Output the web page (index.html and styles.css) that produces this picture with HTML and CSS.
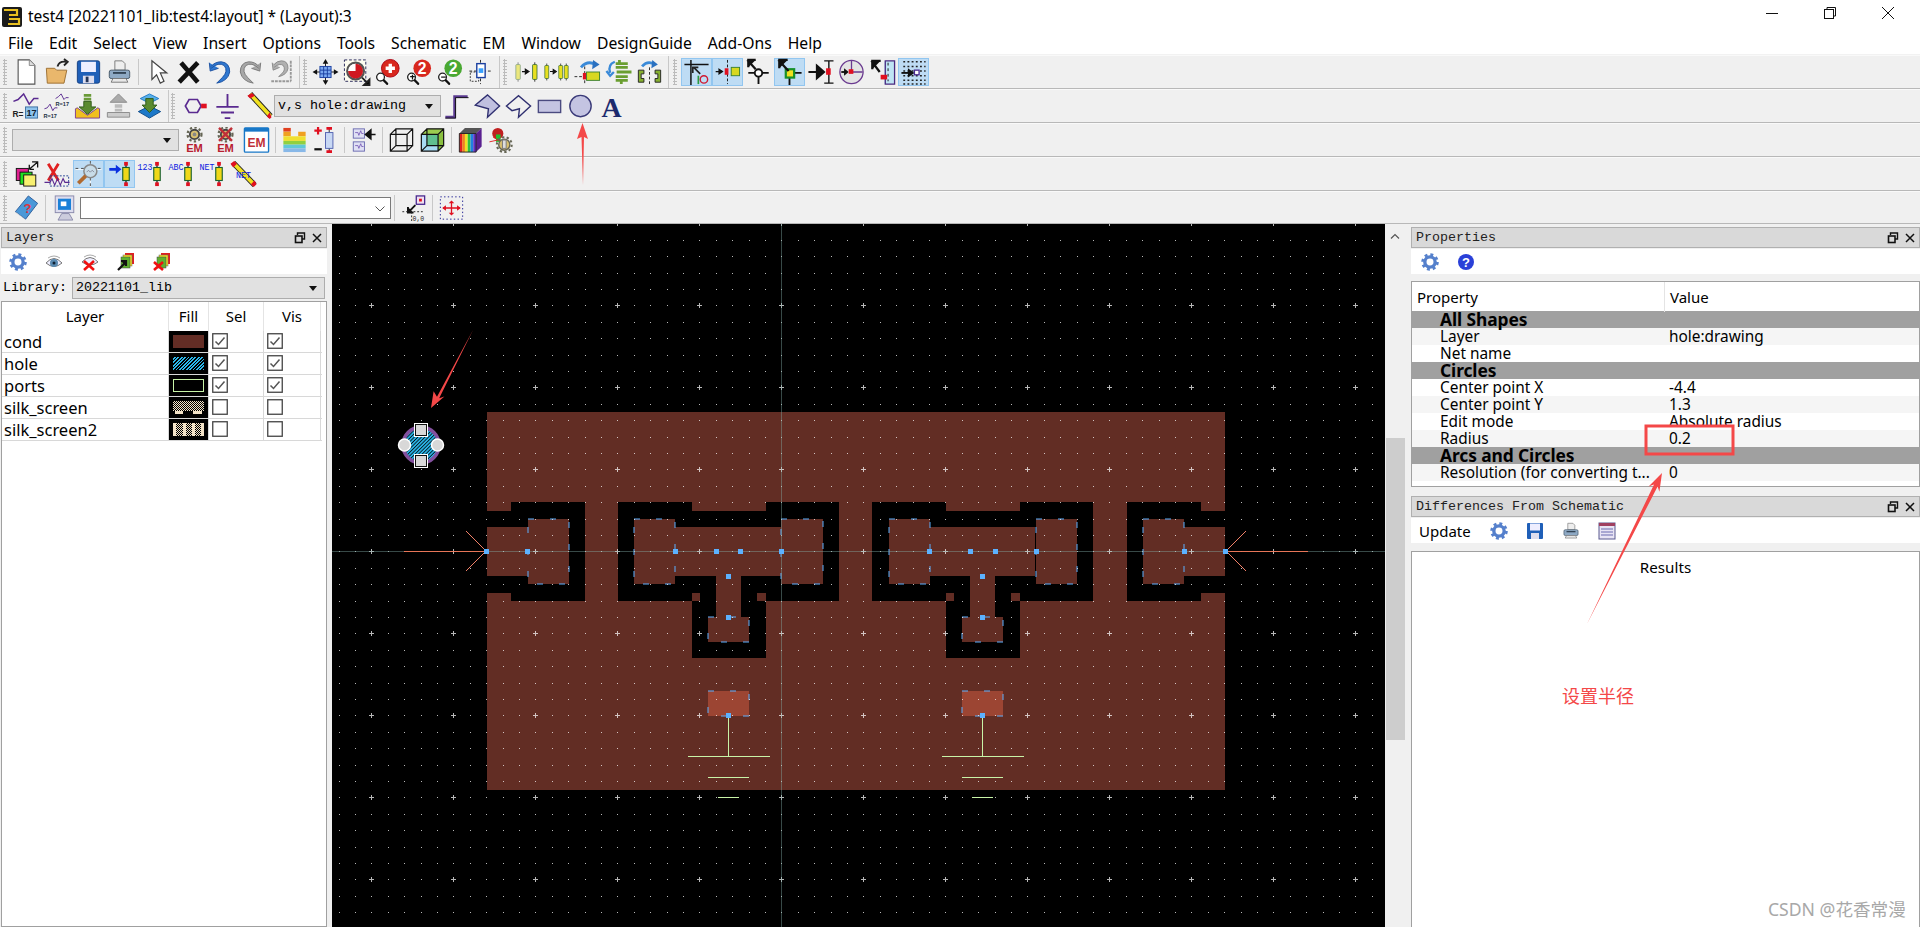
FILE: index.html
```html
<!DOCTYPE html>
<html lang="en">
<head>
<meta charset="utf-8">
<title>test4 layout</title>
<link rel="stylesheet" href="styles.css">
</head>
<body>
<svg class="defs" width="0" height="0">
  <defs>
    <symbol id="gear" viewBox="0 0 16 16"><circle cx="8" cy="8" r="4.6" fill="none" stroke="currentColor" stroke-width="3"/><circle cx="8" cy="8" r="6.6" fill="none" stroke="currentColor" stroke-width="2.4" stroke-dasharray="2.6 2.6"/></symbol>
    <symbol id="gearem" viewBox="0 0 28 28"><circle cx="14" cy="8" r="5" fill="#d8c070" stroke="#444" stroke-width="2"/><circle cx="14" cy="8" r="7.5" fill="none" stroke="#665" stroke-width="2.4" stroke-dasharray="2.5 2.5"/><circle cx="14" cy="8" r="2" fill="#888"/><text x="14" y="27" class="em">EM</text></symbol>
    <symbol id="comp" viewBox="0 0 14 28"><path d="M7 1v26" stroke="#222" stroke-width="1.4"/><rect x="5" y="1" width="4" height="4" fill="#e01020"/><rect x="5" y="23" width="4" height="4" fill="#e01020"/><rect x="3.5" y="7" width="7" height="14" fill="#f0d818" stroke="#186030" stroke-width="1.2"/></symbol>
    <symbol id="comp2" viewBox="0 0 10 28"><path d="M5 1v26" stroke="#222" stroke-width="1.2"/><rect x="2" y="4" width="6" height="20" rx="1" fill="#e8e020" stroke="#266030"/></symbol>
    <symbol id="blk" viewBox="0 0 14 12"><path d="M0 6h7M6 2l6 4-6 4z" stroke="#111" stroke-width="2" fill="#111"/></symbol>
    <symbol id="mag" viewBox="0 0 14 14"><circle cx="5.5" cy="5.5" r="4.2" fill="#fff" stroke="#222" stroke-width="1.4"/><path d="M8.5 8.5l5 5" stroke="#111" stroke-width="2.4"/></symbol>
    <symbol id="chk" viewBox="0 0 16 16"><rect x=".75" y=".75" width="14.5" height="14.5" fill="#fff" stroke="#444" stroke-width="1.3"/></symbol>
    <symbol id="tick" viewBox="0 0 16 16"><rect x=".75" y=".75" width="14.5" height="14.5" fill="#fff" stroke="#444" stroke-width="1.3"/><path d="M3.5 8.5l3 3 6-7" fill="none" stroke="#555" stroke-width="1.5"/></symbol>
    <symbol id="dock" viewBox="0 0 12 12"><path d="M3.5 3V1h7v6H8" fill="none" stroke="#111" stroke-width="1.4"/><rect x="1.5" y="4" width="6.5" height="6.5" fill="none" stroke="#111" stroke-width="1.6"/></symbol>
    <symbol id="close" viewBox="0 0 12 12"><path d="M2 2l8 8M10 2l-8 8" stroke="#111" stroke-width="1.5"/></symbol>
    <symbol id="printer" viewBox="0 0 28 28"><path d="M9 12V2h8l3 3v7z" fill="#eee" stroke="#777"/><rect x="3" y="12" width="22" height="9" rx="2" fill="#8ea9c4" stroke="#456"/><path d="M7 21h14l2 4H5z" fill="#e8e8e8" stroke="#777"/><rect x="7" y="14" width="14" height="2" fill="#345"/></symbol>
    <pattern id="grid" patternUnits="userSpaceOnUse" x="740" y="510" width="82" height="82">
      <path d="M39 41h5v1h-5zM41 39h1v5h-1z" fill="#fff"/>
      <path d="M58 41h1v1h-1zM74 41h1v1h-1zM9 41h1v1H9zM25 41h1v1h-1zM41 58h1v1h-1zM58 58h1v1h-1zM74 58h1v1h-1zM9 58h1v1H9zM25 58h1v1h-1zM41 74h1v1h-1zM58 74h1v1h-1zM74 74h1v1h-1zM9 74h1v1H9zM25 74h1v1h-1zM41 9h1v1h-1zM58 9h1v1h-1zM74 9h1v1h-1zM9 9h1v1H9zM25 9h1v1h-1zM41 25h1v1h-1zM58 25h1v1h-1zM74 25h1v1h-1zM9 25h1v1H9zM25 25h1v1h-1z" fill="#fff"/>
    </pattern>
    <pattern id="hatch" patternUnits="userSpaceOnUse" width="2.5" height="2.5" patternTransform="rotate(-45)"><rect width="2.5" height="2.5" fill="#04141c"/><rect width="2.5" height="1.6" fill="#2bb8ec"/></pattern>
  </defs>
</svg>

<header class="titlebar">
  <svg class="logo" width="20" height="20" viewBox="0 0 20 20"><rect width="20" height="20" rx="2" fill="#1b1b1b"/><path d="M2 3h13v5h-4M7 8h8M7 12h10v5H6" fill="none" stroke="#e8c020" stroke-width="2.2"/></svg>
  <span class="wintitle">test4 [20221101_lib:test4:layout] * (Layout):3</span>
  <div class="winctl">
    <svg width="12" height="12" viewBox="0 0 12 12"><path d="M0 6.5h12" stroke="#111"/></svg>
    <svg width="12" height="12" viewBox="0 0 12 12"><path d="M3 2.5V.5h8.500v8.500H9.500" fill="none" stroke="#111"/><rect x=".5" y="2.500" width="9" height="9" fill="none" stroke="#111"/></svg>
    <svg width="12" height="12" viewBox="0 0 12 12"><path d="M0 0l12 12M12 0L0 12" stroke="#111"/></svg>
  </div>
</header>

<nav class="menubar">
  <span>File</span><span>Edit</span><span>Select</span><span>View</span><span>Insert</span><span>Options</span><span>Tools</span><span>Schematic</span><span>EM</span><span>Window</span><span>DesignGuide</span><span>Add-Ons</span><span>Help</span>
</nav>

<section class="toolrow">
  <div class="grp w300">
    <i class="grip"></i>
    <b class="tb"><svg viewBox="0 0 28 28"><path d="M5 1h12l6 6v20H5z" fill="#fff" stroke="#555" stroke-width="1.2"/><path d="M17 1v6h6" fill="#ddd" stroke="#888"/></svg></b>
    <b class="tb"><svg viewBox="0 0 28 28"><path d="M2 10h9l2 2h11l-3 14H3z" fill="#e9b76c" stroke="#9a6d30"/><path d="M14 8q2-6 9-5M21 0l4 3-4 4" fill="none" stroke="#222" stroke-width="2"/></svg></b>
    <b class="tb"><svg viewBox="0 0 28 28"><rect x="2" y="2" width="24" height="24" rx="2" fill="#1f5fb8" stroke="#123d80"/><rect x="6" y="3" width="16" height="11" fill="#eef"/><rect x="8" y="18" width="12" height="8" fill="#dde"/><rect x="11" y="19" width="3" height="6" fill="#235"/></svg></b>
    <b class="tb"><svg viewBox="0 0 28 28"><use href="#printer"/></svg></b>
    <i class="sep"></i>
    <b class="tb"><svg viewBox="0 0 28 28"><path d="M8 2v20l5-5 4 9 4-2-4-9h7z" fill="#fff" stroke="#444" stroke-width="1.3"/></svg></b>
    <b class="tb"><svg viewBox="0 0 28 28"><path d="M4 25L24 4M6 4l18 21" stroke="#111" stroke-width="5"/></svg></b>
    <b class="tb"><svg viewBox="0 0 28 28"><path d="M3 4l1 9 9-3M5 10q8-7 14-3 5 6-2 13l-6 6q12-2 14-12 0-10-9-11-7 0-11 5" fill="#2f78d0" stroke="#1a4fa0"/></svg></b>
    <b class="tb"><svg viewBox="0 0 28 28"><path d="M25 4l-1 9-9-3M23 10q-8-7-14-3-5 6 2 13l6 6Q5 24 3 14 3 4 12 3q7 0 11 5" fill="#a8a8a8" stroke="#777"/></svg></b>
    <b class="tb"><svg viewBox="0 0 28 28"><path d="M4 4l1 8 7-3M6 9q6-5 10-2 3 5-2 9l-3 3q9-2 10-9 0-8-7-8-5 0-8 4" fill="#b0b0b0" stroke="#888"/><path d="M24 2v22M3 24h21" stroke="#999" stroke-width="2" stroke-dasharray="3 1"/></svg></b>
  </div>
  <div class="grp w200 tight">
    <i class="grip"></i>
    <b class="tb"><svg viewBox="0 0 28 28"><path d="M14 0l-3 5h6zM14 28l-3-5h6zM0 14l5-3v6zM28 14l-5-3v6z" fill="#111"/><path d="M14 4v20M4 14h20" stroke="#111"/><rect x="8" y="8" width="12" height="12" fill="#7aa8f0" stroke="#1a3fa0"/><path d="M12 8v12M16 8v12M8 12h12M8 16h12" stroke="#1a3fa0"/></svg></b>
    <b class="tb"><svg viewBox="0 0 28 28"><rect x="1" y="1" width="23" height="23" fill="#fdfdf0" stroke="#225" stroke-dasharray="3 2"/><circle cx="13" cy="13" r="9" fill="#eee" stroke="#555" stroke-width="2.400"/><path d="M13 13V5a8 8 0 0 0-8 8z" fill="#fff"/><path d="M13 5a8 8 0 0 1 0 16 8 8 0 0 1-8-8h8z" fill="#d01820"/><path d="M20 20l6 6M28 22v6h-6z" stroke="#222" stroke-width="2"/></svg></b>
    <b class="tb"><svg viewBox="0 0 28 28"><circle cx="17" cy="10" r="9.500" fill="#d8281e" stroke="#a01"/><path d="M12 10h10M17 5v10" stroke="#fff" stroke-width="3.600"/><use href="#mag" x="1" y="14" width="14" height="14"/></svg></b>
    <b class="tb"><svg viewBox="0 0 28 28"><circle cx="18" cy="10" r="9.500" fill="#d8281e"/><text x="18" y="16" class="big2">2</text><use href="#mag" x="1" y="14" width="14" height="14"/><path d="M5 19h5M7.500 17v5" stroke="#111" stroke-width="1.300"/></svg></b>
    <b class="tb"><svg viewBox="0 0 28 28"><circle cx="18" cy="10" r="9.500" fill="#49a832"/><text x="18" y="16" class="big2">2</text><use href="#mag" x="1" y="14" width="14" height="14"/><path d="M5 19.500h5" stroke="#111" stroke-width="1.300"/></svg></b>
    <b class="tb"><svg viewBox="0 0 28 28"><path d="M14 1v26M2 13h24" stroke="#222" stroke-dasharray="3 2"/><rect x="3" y="14" width="9" height="10" fill="none" stroke="#333" stroke-dasharray="2 1.500"/><rect x="10" y="5" width="9" height="15" fill="#fff" stroke="#1a3fa0" stroke-width="1.500"/><rect x="12" y="10" width="5" height="5" fill="#38a0ff"/></svg></b>
  </div>
  <div class="grp w169 tight">
    <i class="grip"></i>
    <b class="tb"><svg viewBox="0 0 28 28"><use href="#comp2" x="2" y="0" width="8" height="28" opacity=".55"/><use href="#blk" x="10" y="9" width="9" height="9"/><use href="#comp2" x="20" y="0" width="8" height="28"/></svg></b>
    <b class="tb"><svg viewBox="0 0 28 28"><use href="#comp2" x="0" y="0" width="7" height="28"/><use href="#blk" x="7" y="9" width="8" height="9"/><use href="#comp2" x="15" y="0" width="7" height="28"/><use href="#comp2" x="21" y="0" width="7" height="28"/></svg></b>
    <b class="tb"><svg viewBox="0 0 28 28"><path d="M7 9Q14 1 23 6" fill="none" stroke="#3a8ad8" stroke-width="3"/><path d="M20 1l7 5-8 5z" fill="#2a70c0"/><path d="M0 19h8M11 8v20" stroke="#222" stroke-dasharray="3 2"/><rect x="9" y="15" width="4" height="7" fill="#e01020"/><rect x="13" y="14" width="14" height="9" fill="#d8d820" stroke="#3a8030"/></svg></b>
    <b class="tb"><svg viewBox="0 0 28 28"><path d="M10 3Q2 6 5 15M1 13l4 5 4-4" fill="none" stroke="#3a8ad8" stroke-width="2.500"/><path d="M15 1v4M11 5h13M11 9h13M12 14h16M11 19h13M11 23h13M17 23v4" stroke="#6a9e30" stroke-width="3"/></svg></b>
    <b class="tb"><svg viewBox="0 0 28 28"><path d="M6 8Q12 1 20 6" fill="none" stroke="#3a8ad8" stroke-width="3"/><path d="M17 1l6 5-7 4z" fill="#2a70c0"/><path d="M14 9v19" stroke="#222" stroke-dasharray="3 2"/><path d="M2 12h6v4H5v5h3v4H2zM26 12h-6v4h3v5h-3v4h6z" fill="#86b030" stroke="#222"/></svg></b>
  </div>
  <div class="grp snapgrp">
    <i class="grip"></i>
    <b class="tb on"><svg viewBox="0 0 28 28"><path d="M1 6h26M8 1v27" stroke="#111" stroke-width="1.600"/><path d="M11 9l7 7M10 15V9h6" fill="none" stroke="#222" stroke-width="1.800"/><path d="M16 18v9" stroke="#2a9a40" stroke-width="1.800"/><circle cx="22" cy="22" r="4" fill="none" stroke="#d01830" stroke-width="1.500"/></svg></b>
    <b class="tb on"><svg viewBox="0 0 28 28"><path d="M14 1v26" stroke="#111" stroke-dasharray="3 2"/><use href="#blk" x="1" y="9" width="9" height="9"/><rect x="11" y="10" width="4" height="7" fill="#e01020"/><rect x="18" y="9" width="9" height="9" fill="#d8d820" stroke="#3a8030"/></svg></b>
    <b class="tb"><svg viewBox="0 0 28 28"><path d="M3 15h22M14 15v12" stroke="#111" stroke-width="2"/><circle cx="14" cy="15" r="4" fill="#fff" stroke="#111" stroke-width="2"/><path d="M2 1l9 10M3 9V1h8" fill="#111" stroke="#111" stroke-width="2.400"/></svg></b>
    <b class="tb on"><svg viewBox="0 0 28 28"><path d="M14 15h13M14 15v13" stroke="#111" stroke-width="2"/><rect x="10" y="11" width="9" height="9" fill="#f0e020" stroke="#18902a" stroke-width="2.400"/><path d="M2 1l11 12M3 10V1h9" fill="#111" stroke="#111" stroke-width="2.400"/></svg></b>
    <b class="tb"><svg viewBox="0 0 28 28"><path d="M23 2v24M18 2h10M18 26h10" stroke="#111" stroke-width="1.500"/><path d="M1 14h10M10 7l8 7-8 7z" fill="#111" stroke="#111" stroke-width="2"/><rect x="20" y="10" width="5" height="7" fill="#e01020"/></svg></b>
    <b class="tb"><svg viewBox="0 0 28 28"><circle cx="14" cy="14" r="12.500" fill="#e4e4e4" stroke="#6a3a90" stroke-width="1.400"/><path d="M14 2v12h12" stroke="#6a3a90" stroke-width="1.400" fill="none"/><path d="M3 14h4" stroke="#111" stroke-width="2"/><path d="M6 10l5 4-5 4z" fill="#111"/><rect x="11" y="11" width="5" height="5" fill="#e01020"/></svg></b>
    <b class="tb"><svg viewBox="0 0 28 28"><rect x="16" y="2" width="11" height="25" fill="#bfe4f4"/><path d="M17 2h10v25H17z" fill="none" stroke="#4a2a80" stroke-width="1.400"/><path d="M20 4v20" stroke="#111" stroke-dasharray="3 3"/><rect x="12" y="17" width="7" height="5" fill="#e01020"/><path d="M2 2l9 12M3 11V2h9" fill="#111" stroke="#111" stroke-width="2.400"/></svg></b>
    <b class="tb on"><svg viewBox="0 0 28 28"><path d="M3 3h24M3 8h24M3 13h24M3 18h24M3 23h24M3 27h24" stroke="#222" stroke-width="1.600" stroke-dasharray="2 2.500"/><path d="M1 15h9" stroke="#111" stroke-width="2"/><path d="M8 10l7 5-7 5z" fill="#111"/><rect x="15" y="12" width="5" height="5" fill="#fff" stroke="#4a2a90" stroke-width="1.400"/></svg></b>
  </div>
</section>

<section class="toolrow">
  <div class="grp w169">
    <i class="grip"></i>
    <b class="tb"><svg viewBox="0 0 28 28"><path d="M1 9l5-2 6-6 6 11 5-6h5" fill="none" stroke="#5a2a90" stroke-width="1.600"/><text x="0" y="26" class="rt">R=</text><rect x="14" y="15" width="13" height="12" fill="#8ec4ec" stroke="#3a6ea0"/><text x="20.500" y="25" class="rn">17</text></svg></b>
    <b class="tb"><svg viewBox="0 0 28 28"><path d="M13 6l3-2 3-3 3 6 2-2h3M1 17l3-1 3-4 3 7 2-3h3" fill="none" stroke="#5a2a90"/><text x="13" y="14" class="rs">R=17</text><text x="0" y="27" class="rs">R=17</text></svg></b>
    <b class="tb"><svg viewBox="0 0 28 28"><path d="M10 1h8v3h-8zM10 5h8v3h-8z" fill="#6a9a38"/><path d="M10 9h8v6h5l-9 8-9-8h5z" fill="#5a8a30" stroke="#2f5a18"/><path d="M1 17l2-1 11 8 11-8 2 1v10H1z" fill="#f0c020" stroke="#7a3a90"/></svg></b>
    <b class="tb"><svg viewBox="0 0 28 28"><path d="M10 12h8v4h-8zM10 17h8v3h-8z" fill="#bbb"/><path d="M14 1l9 9H5z" fill="#aaa" stroke="#888"/><path d="M2 21h24v5H2z" fill="#ccc" stroke="#888"/></svg></b>
    <b class="tb"><svg viewBox="0 0 28 28"><path d="M14 14L2 20l12 7 12-7z" fill="#1c78c8" stroke="#0c4a88"/><path d="M14 1L4 6l10 5 10-5z" fill="#58b0e8" stroke="#1c78c8"/><path d="M10 6h8v7h4l-8 8-8-8h4z" fill="#5a8a30" stroke="#2f5a18"/></svg></b>
  </div>
  <div class="grp">
    <i class="grip gap-l"></i>
    <b class="tb"><svg viewBox="0 0 28 28"><path d="M6 7h9l4 7-4 7H6l-4-7z" fill="none" stroke="#5a2a90" stroke-width="1.800"/><rect x="19" y="11.500" width="6" height="5" fill="#e01020"/></svg></b>
    <b class="tb"><svg viewBox="0 0 28 28"><path d="M14 1v14M2 15h24M7 21h14M11 27h6" stroke="#5a2a90" stroke-width="2"/></svg></b>
    <b class="tb"><svg viewBox="0 0 28 28"><path d="M5 1l22 24" stroke="#222" stroke-width="6"/><path d="M5 1l22 24" stroke="#f0e020" stroke-width="4"/><path d="M2 3l5-3 3 3-5 3zM23 25l3-4 2 5-2 2z" fill="#e01020"/></svg></b>
    <div class="combo c-layer"><span>v,s hole:drawing</span><i class="caret"></i></div>
    <b class="tb"><svg viewBox="0 0 28 28"><path d="M2 26h10V4h14" fill="none" stroke="#5a3a90" stroke-width="3"/><path d="M2 27h11V5h14" fill="none" stroke="#111" stroke-width="1"/></svg></b>
    <b class="tb"><svg viewBox="0 0 28 28"><path d="M1 13L14 2l13 12-13 12 1-9z" fill="#c0c0e0" stroke="#2f2f70" stroke-width="1.500"/></svg></b>
    <b class="tb"><svg viewBox="0 0 28 28"><path d="M1 14L14 3l13 11-13 12 1-9-8 2z" fill="#f0f0f0" stroke="#2f2f70" stroke-width="1.500"/></svg></b>
    <b class="tb"><svg viewBox="0 0 28 28"><rect x="2" y="8" width="24" height="13" fill="#c4c4e2" stroke="#4a4a80" stroke-width="1.500"/></svg></b>
    <b class="tb"><svg viewBox="0 0 28 28"><circle cx="14" cy="14" r="11.500" fill="#c4c4e2" stroke="#3a3a78" stroke-width="1.500"/></svg></b>
    <b class="tb"><svg viewBox="0 0 28 28"><text x="14" y="26" class="bigA">A</text></svg></b>
  </div>
</section>

<section class="toolrow">
  <div class="grp">
    <i class="grip small"></i>
    <div class="combo c-empty"><i class="caret"></i></div>
    <b class="tb"><svg viewBox="0 0 28 28"><use href="#gearem"/></svg></b>
    <b class="tb"><svg viewBox="0 0 28 28"><use href="#gearem"/><path d="M7 1l14 14M21 1L7 15" stroke="#c03038" stroke-width="2.600"/></svg></b>
    <b class="tb"><svg viewBox="0 0 28 28"><rect x="1" y="1" width="26" height="26" rx="1" fill="#fff" stroke="#1878c8" stroke-width="1.500"/><rect x="1" y="1" width="26" height="4" fill="#1878c8"/><text x="14" y="21" class="emw">EM</text></svg></b>
    <i class="sep"></i>
    <b class="tb"><svg viewBox="0 0 28 28"><path d="M2 1h8v4H2z" fill="#e04020"/><path d="M2 5h8v5H2zM18 5h8v5h-8z" fill="#f0a020"/><path d="M2 10h24v5H2z" fill="#f0e030"/><path d="M2 15h24v4H2z" fill="#90d040"/><path d="M2 19h24v4H2z" fill="#60c8d8"/><path d="M2 23h24v4H2z" fill="#88b8e8"/></svg></b>
    <b class="tb"><svg viewBox="0 0 28 28"><path d="M18 0v28" stroke="#222"/><rect x="15" y="0" width="6" height="3" fill="#e01020"/><rect x="15" y="25" width="6" height="3" fill="#e01020"/><rect x="14" y="6" width="8" height="17" fill="#c8d8f4" stroke="#5060b0"/><path d="M2 4h8M6 0v8" stroke="#e01020" stroke-width="2.400"/><path d="M2 24h8" stroke="#111" stroke-width="2.400"/></svg></b>
    <i class="sep"></i>
    <b class="tb"><svg viewBox="0 0 28 28"><rect x="3" y="2" width="12" height="10" fill="#e0e0f4" stroke="#6a6ab0"/><rect x="3" y="16" width="12" height="10" fill="#e0e0f4" stroke="#6a6ab0"/><path d="M5 6h3l1 3 2-5 1 3h2M5 20h3l1 3 2-5 1 3h2" fill="none" stroke="#6a4ab0" stroke-width=".8"/><path d="M17 8h10M22 3l-6 5 6 5z" stroke="#111" fill="#111" stroke-width="1.500"/></svg></b>
    <i class="sep"></i>
    <b class="tb"><svg viewBox="0 0 28 28"><path d="M2 8h18v18H2zM8 2h18v18H8zM2 8l6-6M20 8l6-6M20 26l6-6M2 26l6-6" fill="none" stroke="#111" stroke-width="1.300"/></svg></b>
    <b class="tb"><svg viewBox="0 0 28 28"><path d="M2 8h18v18H2z" fill="#a8dcf4"/><path d="M20 8l6-6v18l-6 6z" fill="#8ac040"/><path d="M2 8l6-6h18l-6 6z" fill="#9ccc50"/><path d="M8 8h12v12H8z" fill="#60c090"/><path d="M2 8h18v18H2zM8 2h18v18H8zM2 8l6-6M20 8l6-6M20 26l6-6M2 26l6-6" fill="none" stroke="#111" stroke-width="1.300"/></svg></b>
    <i class="sep"></i>
    <b class="tb"><svg viewBox="0 0 28 28"><path d="M2 7h3v20H2z" fill="#e02020"/><path d="M5 7h3v20H5z" fill="#f08020"/><path d="M8 7h3v20H8z" fill="#f0e020"/><path d="M11 7h3v20h-3z" fill="#30c040"/><path d="M14 7h3v20h-3z" fill="#2080e0"/><path d="M17 7h3v20h-3z" fill="#6030c0"/><path d="M2 7l6-6h18l-6 6z" fill="#555"/><path d="M20 7l6-6v20l-6 6z" fill="#5a2090"/><path d="M2 7h18v20H2z" fill="none" stroke="#222"/></svg></b>
    <b class="tb"><svg viewBox="0 0 28 28"><circle cx="10" cy="7" r="6" fill="#c02020"/><path d="M8 8h5v8H8z" fill="#20c030"/><path d="M1 16l9-2M5 11l9 5" stroke="#e02020"/><circle cx="17" cy="19" r="6" fill="#d8c070" stroke="#665" stroke-width="1.500"/><circle cx="17" cy="19" r="8" fill="none" stroke="#665" stroke-width="2.200" stroke-dasharray="2.500 2.500"/><rect x="15" y="14" width="4" height="9" fill="#ddd" stroke="#777"/></svg></b>
  </div>
</section>

<section class="toolrow">
  <div class="grp">
    <i class="grip"></i>
    <b class="tb"><svg viewBox="0 0 28 28"><rect x="3" y="8" width="13" height="13" fill="#e02090" stroke="#111"/><rect x="7" y="12" width="13" height="13" fill="#20e020" stroke="#111"/><rect x="11" y="15" width="13" height="12" fill="#f8f070" stroke="#111"/><path d="M17 9l9-8M20 1h6v6M17 9V4M17 9h5" fill="none" stroke="#111" stroke-width="1.400"/></svg></b>
    <b class="tb"><svg viewBox="0 0 28 28"><path d="M4 3l11 18M15 3L4 21" stroke="#e02020" stroke-width="3"/><rect x="6" y="16" width="20" height="11" fill="none" stroke="#1a3a90" stroke-dasharray="2 1.500"/><path d="M0 23h6l2-4 3 7 3-7 3 7 3-7 2 4h5" fill="none" stroke="#5a2a90" stroke-width="1.200"/></svg></b>
    <b class="tb on"><svg viewBox="0 0 28 28"><path d="M0 9h28M16 0v28" stroke="#fff"/><path d="M0 8h28M16 0v28" stroke="#444" stroke-dasharray="3 3"/><circle cx="16" cy="11" r="7" fill="#c8dce8" stroke="#888" stroke-width="1.600"/><path d="M11 16L3 24" stroke="#b06a30" stroke-width="4"/><path d="M12 12l2-2 2 2 2-2 2 2" fill="none" stroke="#778" stroke-width=".8"/></svg></b>
    <b class="tb on"><svg viewBox="0 0 28 28"><path d="M3 9h9" stroke="#0a30e0" stroke-width="3"/><path d="M10 4l6 5-6 5z" fill="#0a30e0"/><use href="#comp" x="14" y="0" width="14" height="28"/></svg></b>
    <b class="tb"><svg viewBox="0 0 28 28"><text x="0" y="10" class="lbl">123</text><use href="#comp" x="14" y="0" width="14" height="28"/></svg></b>
    <b class="tb"><svg viewBox="0 0 28 28"><text x="0" y="10" class="lbl">ABC</text><use href="#comp" x="14" y="0" width="14" height="28"/></svg></b>
    <b class="tb"><svg viewBox="0 0 28 28"><text x="0" y="10" class="lbl">NET</text><use href="#comp" x="14" y="0" width="14" height="28"/></svg></b>
    <b class="tb"><svg viewBox="0 0 28 28"><path d="M3 2l23 24" stroke="#222" stroke-width="6"/><path d="M3 2l23 24" stroke="#f0e020" stroke-width="4"/><path d="M0 3l4-3 3 3-4 4zM22 25l4-4 2 4-3 3z" fill="#e01020"/><text x="6" y="18" class="lbl">NET</text></svg></b>
  </div>
</section>

<section class="toolrow last">
  <div class="grp">
    <i class="grip"></i>
    <b class="tb"><svg viewBox="0 0 28 28"><path d="M16 1l10 8-13 17L2 18z" fill="#4a98d8" stroke="#2a5a98"/><path d="M2 18l11 8 1 1-11-7z" fill="#ddd"/><text x="15" y="19" class="qm">?</text></svg></b>
    <i class="sep"></i>
    <b class="tb"><svg viewBox="0 0 28 28"><rect x="4" y="1" width="20" height="18" fill="#dde" stroke="#8888aa"/><rect x="7" y="4" width="14" height="12" fill="#1a80d8"/><rect x="10" y="7" width="6" height="5" fill="#fff"/><path d="M11 20h8l4 7H7z" fill="#ccccdd" stroke="#8888aa"/></svg></b>
    <div class="combo c-cmd"><svg class="chev" width="10" height="6" viewBox="0 0 10 6"><path d="M.5.5L5 5 9.500.5" fill="none" stroke="#555"/></svg></div>
    <i class="sep"></i>
    <b class="tb"><svg viewBox="0 0 28 28"><rect x="17" y="1" width="9" height="9" fill="#f0e0f0" stroke="#4a2a90" stroke-width="1.400"/><rect x="20" y="4" width="3" height="3" fill="#e01020"/><path d="M16 11l-8 8M8 13v6h6" fill="#111" stroke="#111" stroke-width="2"/><path d="M2 18h24M12 14v14" stroke="#222" stroke-dasharray="2 2"/><text x="13" y="28" class="zero">0,0</text></svg></b>
    <i class="sep"></i>
    <b class="tb"><svg viewBox="0 0 28 28"><rect x="2" y="2" width="24" height="24" fill="none" stroke="#1a1a90" stroke-dasharray="1.500 2.500"/><path d="M5 14h18M14 8v12" stroke="#e01020" stroke-width="1.400"/><path d="M4 14l4-3v6zM24 14l-4-3v6zM14 6l-3 3h6zM14 22l-3-3h6z" fill="#e01020"/></svg></b>
  </div>
</section>

<main class="workspace">
  <aside class="left">
    <div class="docktitle"><span>Layers</span><svg width="12" height="12"><use href="#dock"/></svg><svg width="12" height="12"><use href="#close"/></svg></div>
    <div class="docktools left-tools">
      <svg class="pico gearblue" width="18" height="18"><use href="#gear"/></svg>
      <svg class="pico" width="18" height="18" viewBox="0 0 18 18"><path d="M1 10q8-9 16 0-8 7-16 0z" fill="#eef" stroke="#777"/><path d="M3 5q6-4 12 0" fill="none" stroke="#aaa"/><circle cx="9" cy="10" r="4" fill="#5a8ab0"/><circle cx="9" cy="10" r="1.500" fill="#123"/></svg>
      <svg class="pico" width="18" height="18" viewBox="0 0 18 18"><path d="M1 9q8-9 16 0-8 6-16 0z" fill="#eef" stroke="#777"/><path d="M3 4q6-4 12 0" fill="none" stroke="#aaa"/><path d="M3 8l10 9M13 8L3 17" stroke="#f01010" stroke-width="2.600"/></svg>
      <svg class="pico" width="18" height="18" viewBox="0 0 18 18"><rect x="8" y="0" width="9" height="11" fill="#e02020"/><rect x="6" y="2" width="9" height="11" fill="#f0e020" stroke="#666" stroke-width=".5"/><rect x="4" y="4" width="9" height="11" fill="#60b030" stroke="#444" stroke-width=".5"/><path d="M1 17l8-8M4 8h5v5" stroke="#111" stroke-width="2.200" fill="#111"/></svg>
      <svg class="pico" width="18" height="18" viewBox="0 0 18 18"><rect x="8" y="0" width="9" height="11" fill="#e02020"/><rect x="6" y="2" width="9" height="11" fill="#f0e020" stroke="#666" stroke-width=".5"/><rect x="4" y="4" width="9" height="11" fill="#60b030" stroke="#444" stroke-width=".5"/><path d="M1 9l9 8M10 9l-9 8" stroke="#f01010" stroke-width="2.600"/></svg>
    </div>
    <div class="libraryrow"><label>Library:</label><div class="combo c-lib"><span>20221101_lib</span><i class="caret"></i></div></div>
    <div class="layertable">
      <div class="lhead"><span>Layer</span><span>Fill</span><span>Sel</span><span>Vis</span></div>
      <div class="lrow"><span class="lname">cond</span><span class="swatch"><i class="fill-cond"></i></span><span class="cbox"><svg width="16" height="16"><use href="#tick"/></svg></span><span class="cbox"><svg width="16" height="16"><use href="#tick"/></svg></span></div>
      <div class="lrow"><span class="lname">hole</span><span class="swatch"><i class="fill-hole"></i></span><span class="cbox"><svg width="16" height="16"><use href="#tick"/></svg></span><span class="cbox"><svg width="16" height="16"><use href="#tick"/></svg></span></div>
      <div class="lrow"><span class="lname">ports</span><span class="swatch"><i class="fill-ports"></i></span><span class="cbox"><svg width="16" height="16"><use href="#tick"/></svg></span><span class="cbox"><svg width="16" height="16"><use href="#tick"/></svg></span></div>
      <div class="lrow"><span class="lname">silk_screen</span><span class="swatch"><i class="fill-silk"></i></span><span class="cbox"><svg width="16" height="16"><use href="#chk"/></svg></span><span class="cbox"><svg width="16" height="16"><use href="#chk"/></svg></span></div>
      <div class="lrow"><span class="lname">silk_screen2</span><span class="swatch"><i class="fill-silk2"></i></span><span class="cbox"><svg width="16" height="16"><use href="#chk"/></svg></span><span class="cbox"><svg width="16" height="16"><use href="#chk"/></svg></span></div>
    </div>
  </aside>

  <div class="canvas">
    <svg width="1053" height="703" viewBox="332 224 1053 703">
      <rect x="332" y="224" width="1053" height="703" fill="#000"/>
      <rect x="487" y="412" width="738" height="378" fill="#622d24"/>
      <g fill="#000">
        <path d="M511 502h74v99h-74zM487 511h24v82h-24z"/>
        <path d="M618 502h221v99h-73v57h-74v-57h-74z"/>
        <path d="M872 502h221v99h-73v57h-74v-57h-74z"/>
        <path d="M1127 502h74v99h-74zM1201 511h24v82h-24z"/>
      </g>
      <g fill="#622d24">
        <path d="M692 502h74v9h-74zM946 502h74v9h-74z"/>
        <path d="M692 593h8v8h-8zM757 593h9v8h-9zM946 593h8v8h-8zM1011 593h9v8h-9z"/>
        <path d="M487 527h41v49h-41zM1184 527h41v49h-41z"/>
        <path d="M675 527h106v49h-40v41h-25v-41h-41zM929 527h106v49h-40v41h-25v-41h-41z"/>
      </g>
      <g fill="#622d24" class="padline">
        <rect x="528" y="519" width="41" height="65"/>
        <rect x="634" y="519" width="41" height="65"/>
        <rect x="781" y="519" width="42" height="65"/>
        <rect x="708" y="617" width="41" height="25"/>
        <rect x="889" y="519" width="41" height="65"/>
        <rect x="1036" y="519" width="41" height="65"/>
        <rect x="962" y="617" width="41" height="25"/>
        <rect x="1143" y="519" width="41" height="65"/>
      </g>
      <g fill="#9c4533" class="padline">
        <rect x="708" y="691" width="41" height="25"/>
        <rect x="962" y="691" width="41" height="25"/>
      </g>
      <rect x="332" y="224" width="1053" height="703" fill="url(#grid)" opacity=".72"/>
      <path d="M332 551.500h1053M781.500 224v703" stroke="#82afaa" stroke-opacity=".42"/>
      <path d="M404 551.500h82M1225 551.500h83" stroke="#f07858" stroke-opacity=".95"/>
      <path d="M486 551l-20-20M486 551l-20 20M1226 551l20-20M1226 551l20 20" stroke="#f08068"/>
      <path d="M728.500 716v40M688 756.500h82M708 777.500h41M718 797.500h21M982.500 716v40M942 756.500h82M962 777.500h41M972 797.500h21" stroke="#c8f4a8"/>
      <g fill="#5cb1ff">
        <path d="M484 549h5v5h-5zM525 549h5v5h-5zM673 549h5v5h-5zM714 549h5v5h-5zM738 549h5v5h-5zM779 549h5v5h-5zM927 549h5v5h-5zM968 549h5v5h-5zM993 549h5v5h-5zM1034 549h5v5h-5zM1182 549h5v5h-5zM1223 549h5v5h-5z"/>
        <path d="M726 574h5v5h-5zM726 615h5v5h-5zM726 713h5v5h-5zM980 574h5v5h-5zM980 615h5v5h-5zM980 713h5v5h-5z"/>
      </g>
      <circle cx="421" cy="445" r="18" fill="url(#hatch)" stroke="#83509e" stroke-width="3.500"/>
      <g>
        <rect x="414" y="423" width="14" height="14" fill="#fff"/>
        <rect x="415.500" y="424.500" width="11" height="11" fill="#d8d8d8" stroke="#111"/>
        <rect x="414" y="454" width="14" height="14" fill="#fff"/>
        <rect x="415.500" y="455.500" width="11" height="11" fill="#d8d8d8" stroke="#111"/>
        <circle cx="404.500" cy="445" r="6" fill="#d8d8d8" stroke="#fff" stroke-width="1.500"/>
        <circle cx="437.500" cy="445" r="6" fill="#d8d8d8" stroke="#fff" stroke-width="1.500"/>
      </g>
    </svg>
  </div>

  <div class="vscroll">
    <svg class="upchev" width="10" height="6" viewBox="0 0 10 6"><path d="M1 5.500L5 1.500l4 4" fill="none" stroke="#555" stroke-width="1.200"/></svg>
    <div class="thumb"></div>
  </div>

  <aside class="right">
    <div class="docktitle"><span>Properties</span><svg width="12" height="12"><use href="#dock"/></svg><svg width="12" height="12"><use href="#close"/></svg></div>
    <div class="docktools props-tools">
      <svg class="gearblue" width="18" height="18"><use href="#gear"/></svg>
      <svg width="18" height="18" viewBox="0 0 18 18"><circle cx="9" cy="9" r="8" fill="#2a40d8"/><text x="9" y="14" class="help">?</text></svg>
    </div>
    <div class="proptable">
      <div class="phead"><span>Property</span><span>Value</span></div>
      <div class="prow sect"><span>All Shapes</span><span></span></div>
      <div class="prow alt"><span>Layer</span><span>hole:drawing</span></div>
      <div class="prow"><span>Net name</span><span></span></div>
      <div class="prow sect"><span>Circles</span><span></span></div>
      <div class="prow"><span>Center point X</span><span>-4.4</span></div>
      <div class="prow alt"><span>Center point Y</span><span>1.3</span></div>
      <div class="prow"><span>Edit mode</span><span>Absolute radius</span></div>
      <div class="prow alt"><span>Radius</span><span>0.2</span></div>
      <div class="prow sect"><span>Arcs and Circles</span><span></span></div>
      <div class="prow alt"><span>Resolution (for converting t...</span><span>0</span></div>
    </div>
    <div class="docktitle second"><span>Differences From Schematic</span><svg width="12" height="12"><use href="#dock"/></svg><svg width="12" height="12"><use href="#close"/></svg></div>
    <div class="docktools diff-tools">
      <span class="update">Update</span>
      <svg class="gearblue" width="18" height="18"><use href="#gear"/></svg>
      <svg width="18" height="18" viewBox="0 0 18 18"><rect x="1" y="1" width="16" height="16" rx="1" fill="#1f5fb8"/><rect x="4" y="1.500" width="10" height="7" fill="#eef"/><rect x="5" y="11" width="8" height="6" fill="#dde"/></svg>
      <svg width="18" height="18"><use href="#printer" width="18" height="18"/></svg>
      <svg width="18" height="18" viewBox="0 0 18 18"><rect x="1" y="1" width="16" height="16" fill="#e8e4f4" stroke="#5a5a90"/><path d="M1 1h16v3H1z" fill="#a04060"/><path d="M3 7h12M3 10h12M3 13h12" stroke="#6a6ab0"/></svg>
    </div>
    <div class="results"><span>Results</span></div>
  </aside>
</main>

<svg class="annotations" width="1920" height="927" viewBox="0 0 1920 927">
  <g fill="#f44848">
    <path d="M583 185l-1.500-48-4.500 2 5.500-16 5.500 16-4-2z"/>
    <path d="M473 330l-33.800 68.200 5.200-1.800-13.400 11.600 2.600-16.800 3.400 5.600z"/>
    <path d="M1587 624l70.600-137.600 1.800 5.400 2.600-18.800-13.400 13.400 5.400-1.800z"/>
  </g>
  <rect x="1646" y="426" width="87" height="28" fill="none" stroke="#f44848" stroke-width="3"/>
</svg>
<div class="note">设置半径</div>
<div class="watermark">CSDN @花香常漫</div>
</body>
</html>
```
FILE: styles.css
```css
* { box-sizing: border-box; }
html, body { margin: 0; padding: 0; height: 927px; overflow: hidden; background: #fff; color: #000; }
body { width: 1920px; font-family: "Noto Sans", "Noto Sans CJK SC", sans-serif; font-size: 15px; position: relative; }
.defs { position: absolute; }

.titlebar { height: 31px; display: flex; align-items: center; background: #fff; }
.logo { margin: 3px 6px 0 2px; }
.wintitle { font-size: 15.5px; line-height: 22px; }
.winctl { margin-left: auto; display: flex; margin-right: 26px; gap: 46px; margin-top: -5px; }

.menubar { height: 24px; display: flex; gap: 16px; padding-left: 8px; align-items: center; font-size: 15.7px; line-height: 20px; background: #fff; border-bottom: 1px solid #f2f2f2; }

.toolrow { height: 34px; display: flex; background: #f0f0f0; border-top: 1px solid #f9f9f9; border-bottom: 1px solid #b8b8b8; }
.toolrow.last { height: 33px; }
.grp { display: flex; align-items: center; height: 100%; position: relative; flex: none; }
.w300 { width: 300px; border-right: 1px solid #c8c8c8; }
.w200 { width: 200px; border-right: 1px solid #c8c8c8; }
.w169 { width: 169px; border-right: 1px solid #c8c8c8; }
.snapgrp { padding-left: 1px; }
.grip { width: 4px; height: 26px; margin: 0 3px 0 3px; flex: none; background-image: radial-gradient(circle, #bbb 1px, transparent 1.2px); background-size: 3px 3px; }
.grp > .grip { margin-right: 4px; }
.w200 > .grip, .w169 > .grip { margin-left: 3px; margin-right: 3px; }
.gap-l { margin-left: 2px; margin-right: 6px !important; }
.grp > .grip.small { margin-right: 5px; }
.tb { width: 31px; height: 28px; display: flex; align-items: center; justify-content: center; flex: none; border: 1px solid transparent; }
.tb svg { width: 27px; height: 26px; display: block; overflow: visible; }
.tb.on { background: #bedcf4; border-color: #92c6f0; }
.sep { width: 7px; height: 26px; flex: none; background: linear-gradient(#c8c8c8, #c8c8c8) center / 1px 100% no-repeat; }
.combo { display: flex; align-items: center; border: 1px solid #adadad; background: #e1e1e1; flex: none; position: relative; }
.combo span { font-family: "Liberation Mono", monospace; font-size: 13.33px; line-height: 16px; padding-left: 3px; }
.caret { position: absolute; right: 7px; top: 8px; border: 4px solid transparent; border-top: 5px solid #111; border-bottom: 0; }
.c-layer { width: 167px; height: 22px; }
.c-empty { width: 167px; height: 22px; }
.c-cmd { width: 311px; height: 22px; background: #fff; border-color: #7a7a7a; }
.chev { position: absolute; right: 5px; top: 8px; }

.workspace { height: 703px; display: flex; background: #f0f0f0; }
.left { width: 328px; flex: none; display: flex; flex-direction: column; margin-right: 4px; padding: 3px 1px 0 1px; }
.docktitle { height: 21px; flex: none; display: flex; align-items: center; gap: 5px; background: #d9d9d9; border: 1px solid #b0b0b0; padding: 0 3px 0 4px; }
.docktitle span { font-family: "Liberation Mono", monospace; font-size: 13.33px; margin-right: auto; color: #222; }
.docktools { height: 25px; flex: none; background: #fff; display: flex; align-items: center; margin-top: 1px; }
.left-tools { gap: 18px; padding-left: 8px; }
.libraryrow { height: 23px; display: flex; align-items: center; padding-left: 2px; flex: none; margin-top: 2px; }
.libraryrow label { font-family: "Liberation Mono", monospace; font-size: 13.33px; width: 69px; }
.c-lib { width: 253px; height: 22px; }
.layertable { flex: 1; margin-top: 2px; background: #fff; border: 1px solid #a0a0a0; }
.lhead, .lrow { display: grid; grid-template-columns: 167px 40px 55px 57px; }
.lhead { height: 29px; align-items: center; text-align: center; font-size: 15px; }
.lhead span { height: 100%; line-height: 29px; border-right: 1px solid #e4e4e4; }
.lrow { height: 22px; border-bottom: 1px solid #d8d8d8; width: 320px; }
.lrow > span { border-right: 1px solid #d8d8d8; }
.lname { font-size: 16.5px; line-height: 21px; padding-left: 2px; }
.swatch { background: #000; display: flex; align-items: center; justify-content: center; }
.swatch i { display: block; width: 31px; height: 13px; }
.fill-cond { background: #632d25; }
.fill-hole { background: repeating-linear-gradient(-45deg, #2bb8ec 0 1.2px, #000 1.2px 2.4px); }
.fill-ports { border: 1px solid #c8f4a8; }
.fill-silk { background: linear-gradient(90deg, #000 0 2px, #f3e3c8 2px 10px, #000 10px 20px, #f3e3c8 20px 29px, #000 29px) 0 100% / 100% 3px no-repeat, repeating-conic-gradient(#f3e3c8 0 25%, #000 0 50%) 0 0 / 2px 2px; }
.fill-silk2 { background: linear-gradient(90deg, #f3e3c8 0 3px, transparent 3px 10px, #f3e3c8 10px 13px, transparent 13px 19px, #f3e3c8 19px 22px, transparent 22px 28px, #f3e3c8 28px) 0 0 / 100% 100% no-repeat, repeating-conic-gradient(#f3e3c8 0 25%, #000 0 50%) 0 0 / 2px 2px; }
.cbox { padding: 2px 0 0 3px; display: block; }
.cbox svg { display: block; }

.canvas { width: 1053px; flex: none; line-height: 0; }
.vscroll { width: 26px; flex: none; position: relative; padding-left: 1px; padding-top: 214px; }
.thumb { width: 19px; height: 302px; background: #cdcdcd; }
.upchev { position: absolute; left: 5px; top: 9px; }

.right { width: 509px; flex: none; display: flex; flex-direction: column; padding-top: 3px; }
.props-tools { gap: 18px; padding-left: 10px; }
.props-tools svg, .diff-tools svg { flex: none; }
.gearblue { color: #5580cc; }
.help { font: bold 13px "Liberation Sans", sans-serif; fill: #fff; text-anchor: middle; }
.proptable { height: 206px; flex: none; margin-top: 7px; background: #fff; border: 1px solid #a0a0a0; font-size: 15.4px; }
.phead, .prow { display: grid; grid-template-columns: 253px 1fr; }
.phead { height: 29px; line-height: 30px; font-size: 15px; }
.phead span { padding-left: 5px; border-right: 1px solid #e4e4e4; }
.phead span:last-child { border: 0; padding-left: 5px; }
.prow { height: 17px; line-height: 17px; }
.prow span:first-child { padding-left: 28px; white-space: nowrap; }
.prow span:last-child { padding-left: 4px; }
.sect { background: #a0a0a0; font-weight: 700; font-size: 17.4px; letter-spacing: -.1px; }
.alt { background: #f5f5f5; }
.second { margin-top: 9px; }
.diff-tools { gap: 18px; padding-left: 8px; }
.update { font-size: 15px; margin-right: 1px; }
.results { flex: 1; margin-top: 8px; background: #fff; border: 1px solid #a0a0a0; border-bottom: 0; text-align: center; line-height: 30px; font-size: 15.2px; }
.results span { display: block; }

.annotations { position: absolute; left: 0; top: 0; pointer-events: none; }
.note { position: absolute; left: 1562px; top: 683px; font-size: 18px; line-height: 24px; color: #f44848; font-family: "Noto Sans CJK SC", sans-serif; }
.watermark { position: absolute; left: 1768px; top: 897px; font-size: 17.6px; line-height: 24px; color: #a8a8a8; font-family: "Noto Sans", "Noto Sans CJK SC", sans-serif; }

.padline { stroke: #5cb1ff; stroke-width: 1; stroke-dasharray: 6 16; }
.em { font: 700 12px "Liberation Sans", sans-serif; fill: #b82030; text-anchor: middle; }
.emw { font: 700 13px "Liberation Sans", sans-serif; fill: #c03038; text-anchor: middle; }
.big2 { font: 700 17px "Liberation Sans", sans-serif; fill: #fff; text-anchor: middle; }
.bigA { font: 700 30px "Liberation Serif", serif; fill: #1c2a6e; text-anchor: middle; }
.rt { font: 700 9px "Liberation Sans", sans-serif; fill: #222; }
.rn { font: 700 10px "Liberation Sans", sans-serif; fill: #123; text-anchor: middle; }
.rs { font: 700 6px "Liberation Sans", sans-serif; fill: #234; }
.lbl { font: 9px "Liberation Mono", monospace; fill: #0a20e0; }
.qm { font: 700 14px "Liberation Sans", sans-serif; fill: #e03040; text-anchor: middle; }
.zero { font: 7px "Liberation Mono", monospace; fill: #222; }
```
